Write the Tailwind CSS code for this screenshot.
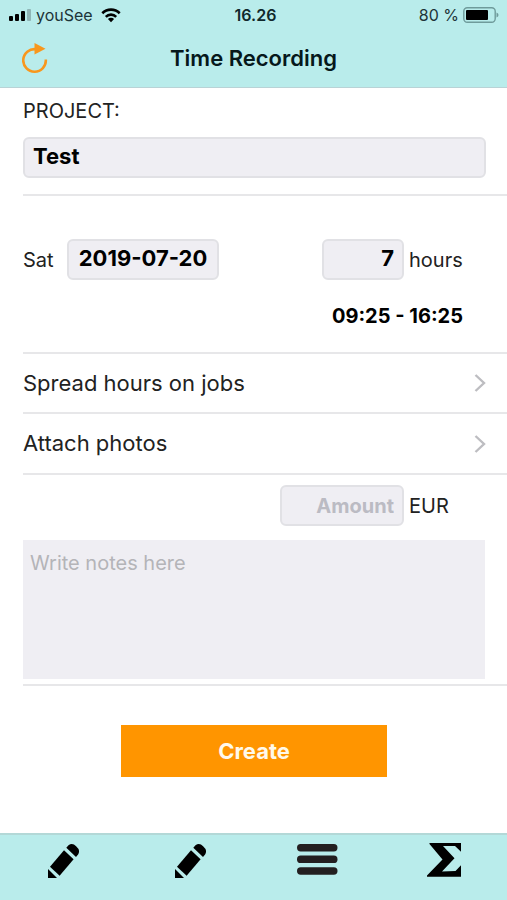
<!DOCTYPE html>
<html lang="en">
<head>
<meta charset="utf-8">
<meta name="viewport" content="width=device-width, initial-scale=1">
<title>Time Recording</title>
<script src="https://cdn.jsdelivr.net/npm/@tailwindcss/browser@4"></script>
</head>
<body class="flex min-h-screen flex-col bg-white font-['Inter',sans-serif] text-[#222]">
<header class="border-b border-[#b9d3d6] bg-[#b9eceb]">
  <div class="grid h-[30px] grid-cols-[1fr_auto_1fr] items-center px-2 text-base text-[#1d3438]">
    <div class="flex items-center gap-1">
      <svg class="h-3 w-6" viewBox="0 0 24 12" aria-hidden="true">
        <rect x="1" y="7" width="4" height="5" rx="1" fill="#000"/><rect x="7" y="5" width="4" height="7" rx="1" fill="#000"/><rect x="13" y="2" width="4" height="10" rx="1" fill="#000"/><rect x="19" y="0" width="4" height="12" rx="1" fill="#8fb5b6"/>
      </svg>
      <span>youSee</span>
      <svg class="ml-1 h-4 w-5" viewBox="0 0 20 16" fill="none" stroke="#000" stroke-width="2.6" aria-hidden="true">
        <path d="M1.3 6.2a12.4 12.4 0 0 1 17.4 0M4.8 9.8a7.4 7.4 0 0 1 10.4 0"/><path d="M10 15.2 6.9 12a4.4 4.4 0 0 1 6.2 0z" fill="#000" stroke="none"/>
      </svg>
    </div>
    <div class="pl-1 font-semibold text-[#10282b]">16.26</div>
    <div class="flex items-center justify-end gap-1">
      <span>80 %</span>
      <svg class="h-4 w-9" viewBox="0 0 36 16" aria-hidden="true">
        <rect x="0.8" y="0.8" width="31.400" height="14.400" rx="3.500" fill="none" stroke="#6f9b9b" stroke-width="1.400"/><rect x="3" y="3" width="22" height="10" rx="1" fill="#000"/><path d="M33.500 5.500q2 .8 2 2.500t-2 2.500z" fill="#6f9b9b"/>
      </svg>
    </div>
  </div>
  <div class="grid h-[57px] grid-cols-[1fr_auto_1fr] items-center px-[22px]">
    <button type="button" aria-label="Refresh" class="w-7">
      <svg class="h-8 w-7" viewBox="0 0 28 32" aria-hidden="true">
        <path d="M23.800 16.500A11.300 11.300 0 1 1 14 6.200" fill="none" stroke="#f8971d" stroke-width="2.600"/><path d="M12.500 0 23.500 5.700 12.500 11.500z" fill="#f8971d"/>
      </svg>
    </button>
    <h1 class="text-[22px] font-semibold text-[#06181b]">Time Recording</h1>
  </div>
</header>
<main class="flex-1">
  <form>
    <section class="ml-[23px] border-b-2 border-[#e7e7e9] pt-2 pr-[21px] pb-4">
      <label for="project" class="block text-xl leading-[30px]">PROJECT:</label>
      <input id="project" value="Test" class="mt-[11px] block h-[41px] w-full rounded-md border-2 border-[#e1e1e5] bg-[#efeef3] px-2 pb-1 text-[22px] font-bold text-black">
    </section>
    <section class="ml-[23px] border-b-2 border-[#e7e7e9] pt-[43px] pb-[18px]">
      <div class="flex items-center">
        <label for="date" class="w-11 text-xl">Sat</label>
        <input id="date" value="2019-07-20" class="h-[41px] w-[152px] rounded-md border-2 border-[#e1e1e5] bg-[#efeef3] pb-1 text-center text-[22px] font-bold text-black">
        <input id="hours" value="7" class="ml-auto h-[41px] w-[82px] rounded-md border-2 border-[#e1e1e5] bg-[#efeef3] px-2 pb-1 text-right text-[22px] font-bold text-black">
        <label for="hours" class="w-[103px] pl-[5px] text-xl">hours</label>
      </div>
      <p class="mt-[18px] pr-11 text-right text-xl leading-9 font-bold text-black">09:25 - 16:25</p>
    </section>
    <button type="button" class="ml-[23px] flex h-[60px] w-[calc(100%-23px)] items-center justify-between border-b-2 border-[#e7e7e9] pr-[21px] text-left text-[22px]">
      Spread hours on jobs
      <svg class="h-5 w-3" viewBox="0 0 12 20" fill="none" stroke="#bdbdc1" stroke-width="2.400" aria-hidden="true"><path d="m1.500 2 8.500 8-8.500 8"/></svg>
    </button>
    <button type="button" class="ml-[23px] flex h-[61px] w-[calc(100%-23px)] items-center justify-between border-b-2 border-[#e7e7e9] pr-[21px] text-left text-[22px]">
      Attach photos
      <svg class="h-5 w-3" viewBox="0 0 12 20" fill="none" stroke="#bdbdc1" stroke-width="2.400" aria-hidden="true"><path d="m1.500 2 8.500 8-8.500 8"/></svg>
    </button>
    <section class="ml-[23px] border-b-2 border-[#e7e7e9] pt-[10px] pb-[5px]">
      <div class="flex items-center justify-end">
        <input id="amount" placeholder="Amount" class="h-[41px] w-[124px] rounded-md border-2 border-[#e1e1e5] bg-[#efeef3] px-2 text-right text-xl font-bold placeholder:text-[#bbbbc3]">
        <label for="amount" class="w-[103px] pl-[5px] text-xl">EUR</label>
      </div>
      <div class="mt-[14px] pr-[22px]">
        <textarea aria-label="Notes" placeholder="Write notes here" class="block h-[139px] w-full resize-none bg-[#efeef3] px-[7px] py-[9px] text-xl placeholder:text-[#b4b4b8]"></textarea>
      </div>
    </section>
    <div class="pt-[39px] pr-[120px] pl-[121px]">
      <button type="button" class="block h-[52px] w-full bg-[#ff9500] text-[22px] font-bold text-[#fff9ea]">Create</button>
    </div>
  </form>
</main>
<nav class="grid h-[67px] grid-cols-4 border-t-2 border-[#b3d8d7] bg-[#b9eceb]">
  <a href="#" aria-label="Edit record" class="flex justify-center pt-[7px]">
    <svg class="h-9 w-8" viewBox="0 0 32 36"><path d="M17 8.300 26.600 17.300 12.600 33.700 3 24.700z"/><path d="M19.300 5.700 21.500 3.200q4-2.600 7.600 1 4.600 4 2 8.200L29 15z"/><path d="M1 27 10 36H1z"/></svg>
  </a>
  <a href="#" aria-label="Edit entry" class="flex justify-center pt-[7px]">
    <svg class="h-9 w-8" viewBox="0 0 32 36"><path d="M17 8.300 26.600 17.300 12.600 33.700 3 24.700z"/><path d="M19.300 5.700 21.500 3.200q4-2.600 7.600 1 4.600 4 2 8.200L29 15z"/><path d="M1 27 10 36H1z"/></svg>
  </a>
  <a href="#" aria-label="List" class="flex justify-center pt-[7px]">
    <svg class="h-9 w-[42px]" viewBox="0 0 42 36" fill="#231f20"><rect x="1" y="2" width="40.500" height="7.500" rx="3.700"/><rect x="1" y="13.600" width="40.500" height="7.500" rx="3.700"/><rect x="1" y="25.200" width="40.500" height="7.500" rx="3.700"/></svg>
  </a>
  <a href="#" aria-label="Totals" class="flex justify-center pt-[7px]">
    <svg class="h-9 w-9" viewBox="0 0 36 36"><path d="M3.500 1H35v8.700L29 4H17L28.500 16.200 16 29.500 29.500 29 35 23.300V34.700H1v-1.200L16.500 17.500 3.500 2z"/></svg>
  </a>
</nav>
</body>
</html>
